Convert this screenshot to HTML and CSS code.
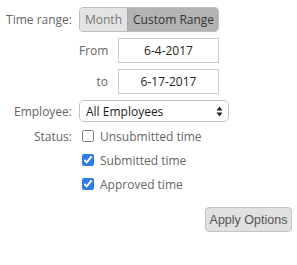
FILE: index.html
```html
<!DOCTYPE html>
<html>
<head>
<meta charset="utf-8">
<link rel="stylesheet" href="styles.css">
</head>
<body>
<form class="options">
  <div class="row row-range">
    <span class="label">Time range:</span>
    <div class="segmented">
      <button type="button" class="seg">Month</button>
      <button type="button" class="seg seg-active">Custom Range</button>
    </div>
  </div>
  <div class="row row-date">
    <span class="label"></span>
    <div class="date-field">
      <span class="date-label">From</span>
      <input class="date-input" type="text" value="6-4-2017">
    </div>
  </div>
  <div class="row row-date">
    <span class="label"></span>
    <div class="date-field">
      <span class="date-label">to</span>
      <input class="date-input" type="text" value="6-17-2017">
    </div>
  </div>
  <div class="row row-employee">
    <span class="label">Employee:</span>
    <div class="select-wrap">
      <select class="select">
        <option>All Employees</option>
      </select>
      <svg class="select-arrows" width="7" height="11" viewBox="0 0 7 11">
        <path d="M3.5 0.5 L6.5 4.5 L0.5 4.5 Z" fill="#222"/>
        <path d="M3.5 10.5 L6.5 6.5 L0.5 6.5 Z" fill="#222"/>
      </svg>
    </div>
  </div>
  <div class="row row-check">
    <span class="label">Status:</span>
    <label class="check"><input type="checkbox"><span>Unsubmitted time</span></label>
  </div>
  <div class="row row-check">
    <span class="label"></span>
    <label class="check"><input type="checkbox" checked><span>Submitted time</span></label>
  </div>
  <div class="row row-check">
    <span class="label"></span>
    <label class="check"><input type="checkbox" checked><span>Approved time</span></label>
  </div>
  <div class="actions">
    <button type="button" class="apply">Apply Options</button>
  </div>
</form>
</body>
</html>
```
FILE: styles.css
```css
html, body {
  margin: 0;
  padding: 0;
  background: #fff;
}
body {
  font-family: "Open Sans", sans-serif;
  font-size: 12px;
  color: #666;
}
.options {
  display: flex;
  flex-direction: column;
  padding: 7px 0 0 0;
  width: 292px;
}
.row {
  display: flex;
  align-items: center;
  column-gap: 7px;
}
.label {
  box-sizing: border-box;
  width: 72px;
  padding-left: 4px;
  text-align: right;
  white-space: nowrap;
  flex: none;
}
.row-range {
  height: 25px;
}
.segmented {
  display: flex;
  height: 25px;
  border: 1px solid #bdbdbd;
  border-radius: 4px;
  overflow: hidden;
  box-sizing: border-box;
  width: 140px;
}
.seg {
  font-family: "Open Sans", sans-serif;
  font-size: 12px;
  border: 0;
  margin: 0;
  padding: 0 5px;
  background: #e4e4e4;
  color: #777;
  height: 100%;
  white-space: nowrap;
}
.seg + .seg {
  border-left: 1px solid #a8a8a8;
}
.seg-active {
  background: #b3b3b3;
  color: #333;
  flex: 1;
}
.row-date {
  margin-top: 6px;
  height: 25px;
}
.date-field {
  display: flex;
  align-items: center;
  column-gap: 10px;
}
.date-label {
  width: 29px;
  text-align: right;
}
.date-input {
  box-sizing: border-box;
  width: 101px;
  height: 25px;
  border: 1px solid #ccc;
  border-radius: 0;
  padding: 0;
  margin: 0;
  text-align: center;
  font-family: "Open Sans", sans-serif;
  font-size: 12px;
  color: #222;
}
.row-employee {
  margin-top: 6px;
  height: 22px;
}
.select-wrap {
  display: flex;
  align-items: center;
  box-sizing: border-box;
  width: 150px;
  height: 22px;
  border: 1px solid #c4c4c4;
  border-radius: 5px;
  padding: 0 5px 0 6px;
}
.select {
  appearance: none;
  -webkit-appearance: none;
  border: 0;
  background: transparent;
  padding: 0;
  margin: 0;
  flex: 1;
  font-family: "Open Sans", sans-serif;
  font-size: 12px;
  color: #222;
  outline: none;
}
.select-arrows {
  flex: none;
}
.row-check {
  height: 24px;
}
.row-employee + .row-check {
  margin-top: 2px;
}
.check {
  display: flex;
  align-items: center;
  column-gap: 6px;
  padding-left: 3px;
}
.check input {
  margin: 0;
  width: 12px;
  height: 12px;
  accent-color: #2f7de1;
}
.actions {
  display: flex;
  justify-content: flex-end;
  margin-top: 11px;
}
.apply {
  font-family: "Liberation Sans", Arial, sans-serif;
  font-size: 12.5px;
  color: #555;
  background: #e0e0e0;
  border: 1px solid #c4c4c4;
  border-radius: 4px;
  height: 25px;
  width: 87px;
  padding: 0;
  margin: 0;
  white-space: nowrap;
}
```
